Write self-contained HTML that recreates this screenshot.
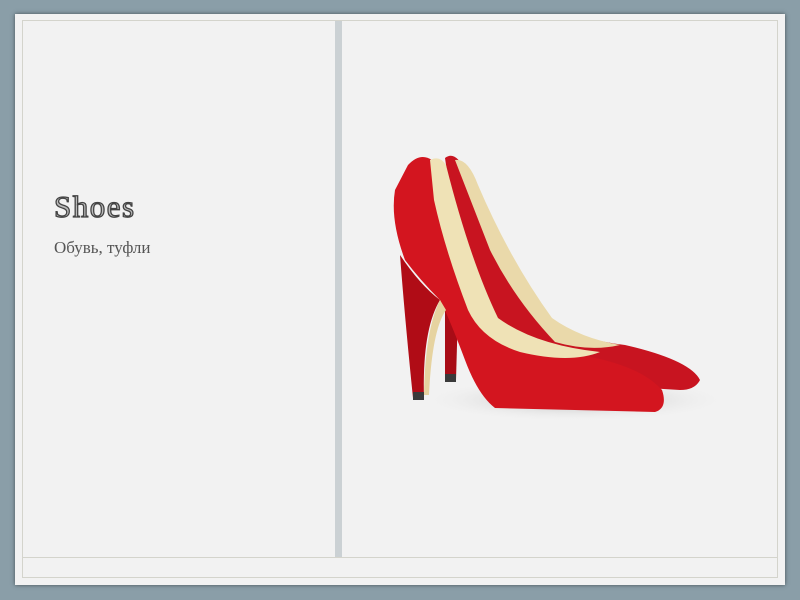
<!DOCTYPE html>
<html><head><meta charset="utf-8"><style>
body{margin:0;width:800px;height:600px;background:#8a9ea8;position:relative;overflow:hidden;font-family:"Liberation Serif",serif}
.card{position:absolute;left:15px;top:14px;width:770px;height:571px;background:#f2f2f2;box-shadow:0 0 4px rgba(0,0,0,.5)}
.frame{position:absolute;left:22px;top:20px;width:754px;height:556px;border:1px solid #d4d4cc}
.div{position:absolute;left:335px;top:21px;width:7px;height:537px;background:#cbd1d4}
.hl{position:absolute;left:23px;top:557px;width:754px;height:1px;background:#d4d4cc}
h1{position:absolute;left:54px;top:189px;margin:0;font-size:31px;font-weight:normal;color:#bbb;-webkit-text-stroke:1.3px #444;letter-spacing:1.5px}
p{position:absolute;left:54px;top:238px;margin:0;font-size:17px;color:#555}
</style></head><body>
<div class="card"></div><div class="frame"></div><div class="div"></div><div class="hl"></div>
<h1>Shoes</h1>
<p>Обувь, туфли</p>
<svg style="position:absolute;left:0;top:0" width="800" height="600" viewBox="0 0 800 600">
<defs><radialGradient id="sh" cx=".5" cy=".5" r=".5"><stop offset="0" stop-color="#b5b5b5"/><stop offset="1" stop-color="#f2f2f2" stop-opacity="0"/></radialGradient></defs>
<ellipse cx="575" cy="400" rx="155" ry="22" fill="url(#sh)"/>
<!-- back shoe -->
<path d="M445 158 Q455 150 465 170 Q500 260 545 320 Q580 340 625 345 Q690 360 700 380 Q695 390 680 390 L600 385 L470 330 Z" fill="#c81420"/>
<path d="M455 160 Q468 158 478 185 Q510 260 552 318 Q580 338 620 345 Q590 352 555 342 Q515 300 490 250 Z" fill="#ead9aa"/>
<path d="M445 300 L445 380 L456 380 L458 310 Z" fill="#a80c16"/>
<rect x="445" y="374" width="11" height="8" fill="#3a3a3a"/>
<!-- front shoe -->
<path d="M408 165 Q420 152 432 160 Q450 250 480 320 Q520 350 580 355 Q640 365 662 390 Q668 408 655 412 L495 408 Q478 395 465 360 Q450 320 440 300 Q420 280 405 260 Q390 220 395 190 Z" fill="#d3151f"/>
<path d="M430 160 Q440 155 446 165 Q470 260 498 318 Q535 345 600 352 Q570 364 520 352 Q482 340 468 310 Q445 250 434 200 Z" fill="#efe2b6"/>
<path d="M400 255 Q405 320 413 398 L424 398 Q422 330 440 300 Q420 285 400 255 Z" fill="#b00c16"/>
<path d="M440 300 Q425 330 424 395 L429 395 Q432 330 446 310 Z" fill="#e6d3a0"/>
<rect x="413" y="392" width="11" height="8" fill="#3a3a3a"/>
</svg>
</body></html>
